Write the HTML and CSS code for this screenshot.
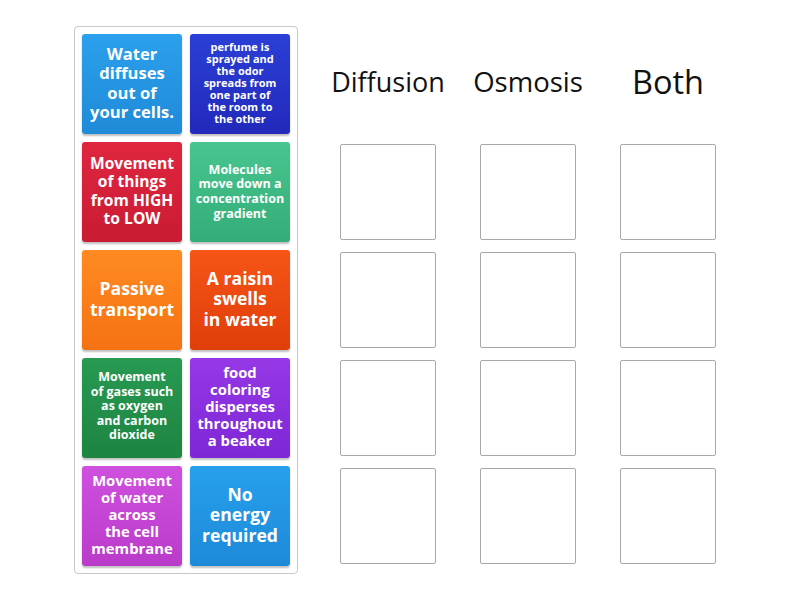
FILE: index.html
```html
<!DOCTYPE html>
<html>
<head>
<meta charset="utf-8">
<link rel="stylesheet" href="styles.css">
</head>
<body>
<div class="page">
  <div class="tray">
    <div class="card c-sky s16">Water<br>diffuses<br>out of<br>your cells.</div>
    <div class="card c-indigo s10">perfume is<br>sprayed and<br>the odor<br>spreads from<br>one part of<br>the room to<br>the other</div>
    <div class="card c-red s15">Movement<br>of things<br>from HIGH<br>to LOW</div>
    <div class="card c-mint s12 low">Molecules<br>move down a<br>concentration<br>gradient</div>
    <div class="card c-orange s17">Passive<br>transport</div>
    <div class="card c-flame s17">A raisin<br>swells<br>in water</div>
    <div class="card c-green s12">Movement<br>of gases such<br>as oxygen<br>and carbon<br>dioxide</div>
    <div class="card c-purple s14">food<br>coloring<br>disperses<br>throughout<br>a beaker</div>
    <div class="card c-magenta s14">Movement<br>of water<br>across<br>the cell<br>membrane</div>
    <div class="card c-blue s17">No<br>energy<br>required</div>
  </div>
  <div class="board">
    <div class="col">
      <div class="head">Diffusion</div>
      <div class="slot"></div><div class="slot"></div><div class="slot"></div><div class="slot"></div>
    </div>
    <div class="col">
      <div class="head osm">Osmosis</div>
      <div class="slot"></div><div class="slot"></div><div class="slot"></div><div class="slot"></div>
    </div>
    <div class="col">
      <div class="head big">Both</div>
      <div class="slot"></div><div class="slot"></div><div class="slot"></div><div class="slot"></div>
    </div>
  </div>
</div>
</body>
</html>
```
FILE: styles.css
```css
html, body { margin: 0; padding: 0; background: #fff; }
body { font-family: "Open Sans", "DejaVu Sans", sans-serif; }
.page {
  display: flex;
  align-items: flex-start;
  padding: 26px 0 0 74px;
}
.tray {
  display: grid;
  grid-template-columns: 100px 100px;
  grid-auto-rows: 100px;
  gap: 8px;
  padding: 7px;
  border: 1px solid #c8c8c8;
  border-radius: 4px;
}
.card {
  display: flex;
  align-items: center;
  justify-content: center;
  text-align: center;
  color: #fff;
  font-weight: 700;
  border-radius: 3px;
  padding: 0 2px 3px;
  box-sizing: border-box;
  white-space: nowrap;
  box-shadow: 0 2px 2px rgba(0,0,0,0.25);
}
.card.low { padding-bottom: 0; }
.s10 { font-size: 11px; line-height: 12px; }
.s12 { font-size: 12.5px; line-height: 14.6px; }
.s14 { font-size: 14.8px; line-height: 17px; }
.s15 { font-size: 15.6px; line-height: 18.4px; }
.s16 { font-size: 16.6px; line-height: 19.4px; }
.s17 { font-size: 17.6px; line-height: 20.6px; }
.c-sky { background: linear-gradient(#2ba0ec, #1f8ad8); }
.c-indigo { background: linear-gradient(#2b3fd6, #2229bb); }
.c-red { background: linear-gradient(#e0263f, #c91b33); }
.c-mint { background: linear-gradient(#48c58f, #34ad78); }
.c-orange { background: linear-gradient(#ff8a22, #f57212); }
.c-flame { background: linear-gradient(#f75417, #e03e0a); }
.c-green { background: linear-gradient(#289a52, #1d8442); }
.c-purple { background: linear-gradient(#9638e6, #7d27d6); }
.c-magenta { background: linear-gradient(#cf4fde, #ba3ac9); }
.c-blue { background: linear-gradient(#27a0ec, #1d8ad8); }
.board {
  display: flex;
  margin-left: 42px;
  gap: 44px;
}
.col {
  display: flex;
  flex-direction: column;
  align-items: center;
  width: 96px;
  gap: 12px;
}
.head {
  width: 160px;
  text-align: center;
  font-size: 27px;
  line-height: 36px;
  height: 36px;
  margin-top: 38px;
  margin-bottom: 32px;
  color: #111;
  font-weight: 400;
}
.head.osm { font-size: 27.5px; }
.head.big { font-size: 32.5px; }
.slot {
  width: 96px;
  height: 96px;
  box-sizing: border-box;
  border: 1px solid #a8a8a8;
  border-radius: 2px;
}
```
